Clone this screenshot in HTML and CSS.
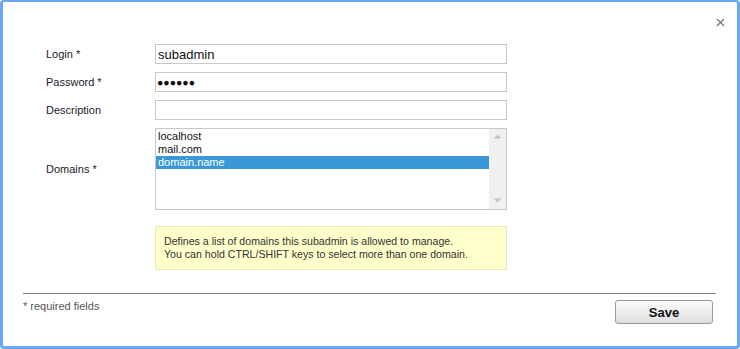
FILE: index.html
```html
<!DOCTYPE html>
<html lang="en">
<head>
    <meta charset="UTF-8">
    <title>Subadmin</title>
    <link rel="stylesheet" href="styles.css">
</head>
<body>
<div class="window">
    <button class="close" title="Close">
        <svg width="9" height="9" viewBox="0 0 9 9"><path d="M1 1L8 8M8 1L1 8" stroke="#7a7a7a" stroke-width="1.4"/></svg>
    </button>
    <div class="form">
        <label class="label" for="login">Login *</label>
        <input class="field" id="login" type="text" value="subadmin">

        <label class="label" for="password">Password *</label>
        <div class="field dots">&#9679;&#9679;&#9679;&#9679;&#9679;&#9679;</div>

        <label class="label" for="description">Description</label>
        <input class="field" id="description" type="text" value="">

        <span class="label">Domains *</span>
        <div class="listbox">
            <div class="options">
                <div class="option">localhost</div>
                <div class="option">mail.com</div>
                <div class="option selected">domain.name</div>
            </div>
            <div class="scrollbar">
                <svg width="9" height="5" viewBox="0 0 9 5"><path d="M0.5 4.5L4.5 0.5L8.5 4.5Z" fill="#c4c4c4"/></svg>
                <svg width="9" height="5" viewBox="0 0 9 5"><path d="M0.5 0.5L4.5 4.5L8.5 0.5Z" fill="#c4c4c4"/></svg>
            </div>
        </div>

        <span></span>
        <div class="hint">
            Defines a list of domains this subadmin is allowed to manage.<br>
            You can hold CTRL/SHIFT keys to select more than one domain.
        </div>
    </div>
    <div class="footer">
        <span class="required">* required fields</span>
        <button class="save">Save</button>
    </div>
</div>
</body>
</html>
```

FILE: styles.css
```css
body {
    margin: 0;
    font-family: Tahoma, "Liberation Sans", "DejaVu Sans", sans-serif;
    background-color: #ffffff;
}
.window {
    position: relative;
    width: 740px;
    height: 349px;
    box-sizing: border-box;
    border: 3px solid #6aa8f7;
    border-top-width: 2px;
    border-radius: 4px;
    background-color: white;
    padding: 42px 0 0 43px;
}
.close {
    position: absolute;
    top: 13px;
    right: 12px;
    padding: 0;
    border: none;
    background: none;
    width: 9px;
    height: 9px;
    cursor: pointer;
}
.form {
    display: grid;
    grid-template-columns: 109px 352px;
    row-gap: 8px;
    align-items: center;
}
.label {
    font-size: 11px;
    color: #1a1a2a;
}
.field {
    height: 20px;
    box-sizing: border-box;
    border: 1px solid #c8c8c8;
    font-family: inherit;
    font-size: 13px;
    color: #111;
    padding: 0 2px;
    margin: 0;
    outline: none;
}
.dots {
    font-size: 10.5px;
    line-height: 18px;
    letter-spacing: 0;
    padding-left: 1px;
}
.listbox {
    display: flex;
    height: 82px;
    box-sizing: border-box;
    border: 1px solid #c8c8c8;
}
.options {
    flex: 1;
    padding-top: 1px;
}
.option {
    font-size: 11px;
    line-height: 13px;
    height: 13px;
    padding-left: 2px;
    color: #111;
}
.option.selected {
    background-color: #3a98d8;
    color: white;
}
.scrollbar {
    width: 17px;
    background-color: #f0f0f0;
    display: flex;
    flex-direction: column;
    justify-content: space-between;
    align-items: center;
    padding: 5px 0 6px;
    box-sizing: border-box;
}
.scrollbar svg {
    display: block;
}
.hint {
    margin-top: 8px;
    height: 44px;
    box-sizing: border-box;
    border: 1px solid #ebe7b8;
    background-color: #ffffcc;
    font-size: 10.6px;
    line-height: 13px;
    color: #333;
    padding: 8px 0 0 8px;
}
.footer {
    display: flex;
    justify-content: space-between;
    align-items: flex-start;
    margin: 23px 21px 0 -23px;
    border-top: 1px solid #7f7f7f;
    padding-top: 6px;
}
.required {
    font-size: 11px;
    color: #555;
    margin-top: 0;
}
.save {
    width: 98px;
    height: 24px;
    margin-right: 3px;
    border: 1px solid #9a9a9a;
    border-radius: 3px;
    background: linear-gradient(#fbfbfb, #dedede);
    font-family: inherit;
    font-size: 13px;
    font-weight: bold;
    color: #111;
    cursor: pointer;
}
```
